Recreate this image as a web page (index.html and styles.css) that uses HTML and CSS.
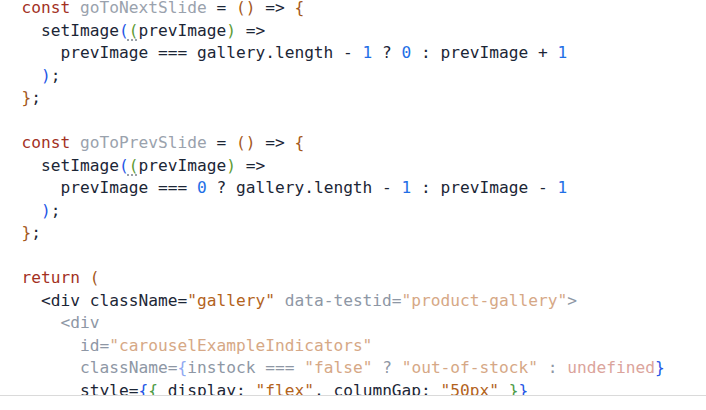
FILE: index.html
```html
<!DOCTYPE html>
<html>
<head>
<meta charset="utf-8">
<link rel="stylesheet" href="styles.css">
</head>
<body>
<div class="editor">
  <div class="code">
    <div class="ln"><span class="kw">const</span> <span class="un">goToNextSlide</span> = <span class="br">()</span> =&gt; <span class="br">{</span></div>
    <div class="ln">  setImage<span class="b1">(</span><span class="fold"><span class="b2">(</span></span>prevImage<span class="b2">)</span> =&gt;</div>
    <div class="ln">    prevImage === gallery.length - <span class="num">1</span> ? <span class="num">0</span> : prevImage + <span class="num">1</span></div>
    <div class="ln">  <span class="b1">)</span>;</div>
    <div class="ln"><span class="br">}</span>;</div>
    <div class="ln"> </div>
    <div class="ln"><span class="kw">const</span> <span class="un">goToPrevSlide</span> = <span class="br">()</span> =&gt; <span class="br">{</span></div>
    <div class="ln">  setImage<span class="b1">(</span><span class="fold"><span class="b2">(</span></span>prevImage<span class="b2">)</span> =&gt;</div>
    <div class="ln">    prevImage === <span class="num">0</span> ? gallery.length - <span class="num">1</span> : prevImage - <span class="num">1</span></div>
    <div class="ln">  <span class="b1">)</span>;</div>
    <div class="ln"><span class="br">}</span>;</div>
    <div class="ln"> </div>
    <div class="ln"><span class="kw">return</span> <span class="br">(</span></div>
    <div class="ln">  &lt;div className=<span class="str">"gallery"</span> <span class="dim">data-testid=</span><span class="dstr">"product-gallery"</span><span class="dim">&gt;</span></div>
    <div class="ln">    <span class="dim">&lt;div</span></div>
    <div class="ln">      <span class="dim">id=</span><span class="dstr">"carouselExampleIndicators"</span></div>
    <div class="ln">      <span class="dim">className=</span><span class="db1">{</span><span class="dim">instock === </span><span class="dstr">"false"</span><span class="dim"> ? </span><span class="dstr">"out-of-stock"</span><span class="dim"> : </span><span class="dund">undefined</span><span class="b1">}</span></div>
    <div class="ln">      style=<span class="b1">{</span><span class="b3">{</span> display: <span class="str">"flex"</span>, columnGap: <span class="str">"50px"</span> <span class="b3">}</span><span class="b1">}</span></div>
  </div>
</div>
</body>
</html>
```

FILE: styles.css
```css
html, body {
  margin: 0;
  padding: 0;
  background: #ffffff;
}

.editor {
  width: 706px;
  height: 410px;
  background: #ffffff;
  overflow: hidden;
}

.code {
  height: 396px;
  box-sizing: border-box;
  border-bottom: 1px solid #dadada;
  overflow: hidden;
  padding-left: 21.5px;
  font-family: "DejaVu Sans Mono", monospace;
  font-size: 16.2px;
  line-height: 16.2px;
  color: #1c2636;
}

.ln {
  white-space: pre;
  height: 22.5px;
}

.kw { color: #a3311f; }
.un { color: #9aa2ad; }
.br { color: #a4581a; }
.num { color: #1f6fe6; }
.str { color: #b3631c; }
.dstr { color: #d6a886; }
.dim { color: #8e97a5; }
.dund { color: #dba49c; }
.b1 { color: #2456e6; }
.b2 { color: #5d9b34; }
.b3 { color: #4c9b45; }
.db1 { color: #8fa8f2; }

.fold {
  position: relative;
}

.fold::after {
  content: "";
  position: absolute;
  left: -3px;
  bottom: -1px;
  width: 12px;
  height: 2px;
  background-image: radial-gradient(circle, #9aa0a8 0.9px, transparent 1.1px);
  background-size: 4px 2px;
}
```
